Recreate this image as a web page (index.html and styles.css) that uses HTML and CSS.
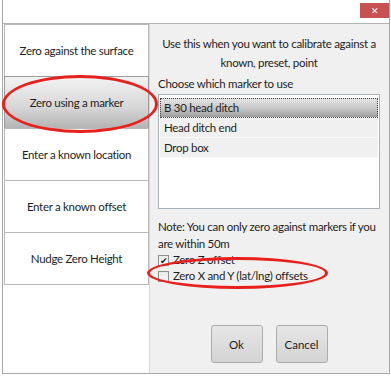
FILE: index.html
```html
<!DOCTYPE html>
<html lang="en">
<head>
    <meta charset="UTF-8">
    <meta name="viewport" content="width=device-width, initial-scale=1.0">
    <title>Zero Calibration</title>
    <link rel="stylesheet" href="styles.css">
</head>
<body>
    <div class="window">
        <div class="titlebar">
            <button class="btn-close">&#x2715;</button>
        </div>

        <div class="content">
            <div class="modes">
                <div class="mode">Zero against the surface</div>
                <div class="mode active">Zero using a marker</div>
                <div class="mode">Enter a known location</div>
                <div class="mode">Enter a known offset</div>
                <div class="mode">Nudge Zero Height</div>
            </div>

            <div class="panel">
                <p class="intro">Use this when you want to calibrate against a known, preset, point</p>
                <p class="label">Choose which marker to use</p>

                <ul class="marker-list">
                    <li class="marker selected">B 30 head ditch</li>
                    <li class="marker">Head ditch end</li>
                    <li class="marker">Drop box</li>
                </ul>

                <p class="note">Note: You can only zero against markers if you are within 50m</p>

                <label class="check"><span class="box checked">&#x2714;</span>Zero Z offset</label>
                <label class="check"><span class="box"></span>Zero X and Y (lat/lng) offsets</label>

                <div class="actions">
                    <button class="btn">Ok</button>
                    <button class="btn">Cancel</button>
                </div>
            </div>
        </div>

        <!-- annotation rings -->
        <div class="ring ring-mode"></div>
        <div class="ring ring-check"></div>
    </div>
</body>
</html>
```

FILE: styles.css
```css
:root {
    --frame: #a8a8a8;
    --panel: #f0f0f0;
    --text: #1e1e1e;
    --ring: #e8201c;
}

* {
    margin: 0;
    padding: 0;
    box-sizing: border-box;
    font-family: 'Lato', 'Noto Sans', sans-serif;
}

body {
    background: #fff;
    color: var(--text);
    font-size: 11.5px;
    letter-spacing: -0.3px;
}

.window {
    position: relative;
    margin-left: 2px;
    width: 388px;
    height: 374px;
    border-left: 1px solid var(--frame);
    border-right: 1px solid var(--frame);
    border-bottom: 1px solid var(--frame);
    display: flex;
    flex-direction: column;
}

.titlebar {
    height: 24px;
    border-bottom: 1px solid #b4b4b4;
    display: flex;
    justify-content: flex-end;
    align-items: flex-start;
    padding-top: 3px;
}

.btn-close {
    width: 29px;
    height: 15px;
    border: none;
    background: #c75050;
    color: #fff;
    font-size: 9px;
    line-height: 15px;
}

.content {
    flex: 1;
    display: flex;
}

.modes {
    width: 146px;
    padding-left: 1px;
    background: #fff;
}

.mode {
    height: 53px;
    border: 1px solid #b9b9b9;
    margin-top: -1px;
    display: flex;
    align-items: center;
    justify-content: center;
    background: #fff;
}

.mode:first-child {
    margin-top: 0;
}

.mode.active {
    background: linear-gradient(#f3f3f3, #d6d6d6 60%, #b4b4b4);
    border-color: #9c9c9c;
}

.panel {
    flex: 1;
    background: var(--panel);
    border-left: 1px solid #d8d8d8;
    padding: 10px 9px 0 8px;
    display: flex;
    flex-direction: column;
}

.intro {
    text-align: center;
    line-height: 19px;
    padding: 0 4px;
}

.label {
    margin-top: 3px;
    line-height: 18px;
}

.marker-list {
    list-style: none;
    height: 115px;
    border: 1px solid #a9b0b6;
    background: #fff;
    padding: 3px 1px;
    margin-top: 1px;
}

.marker {
    height: 20px;
    line-height: 20px;
    padding-left: 4px;
    background: var(--panel);
    border-bottom: 1px solid #fafafa;
}

.marker.selected {
    background: linear-gradient(#e6e6e6, #c4c4c4 60%, #9c9c9c);
    outline: 1px dotted #444;
    outline-offset: -1px;
}

.note {
    margin-top: 9px;
    line-height: 17px;
}

.check {
    display: flex;
    align-items: center;
    gap: 4px;
    line-height: 16px;
}

.box {
    width: 11px;
    height: 11px;
    border: 1px solid #8f8f8f;
    background: linear-gradient(#e8e8e8, #f8f8f8);
    font-size: 9px;
    line-height: 9px;
    text-align: center;
    color: #222;
}

.actions {
    display: flex;
    justify-content: center;
    gap: 13px;
    margin-top: 41px;
}

.btn {
    width: 52px;
    height: 38px;
    border: 1px solid #acacac;
    border-radius: 3px;
    background: linear-gradient(#e6e6e6, #d4d4d4);
    color: var(--text);
    font-size: 11.5px;
}

.ring {
    position: absolute;
    border: 3px solid var(--ring);
    border-radius: 50%;
    pointer-events: none;
}

.ring-mode {
    left: -1px;
    top: 75px;
    width: 156px;
    height: 58px;
}

.ring-check {
    left: 144px;
    top: 257px;
    width: 181px;
    height: 32px;
}
```
